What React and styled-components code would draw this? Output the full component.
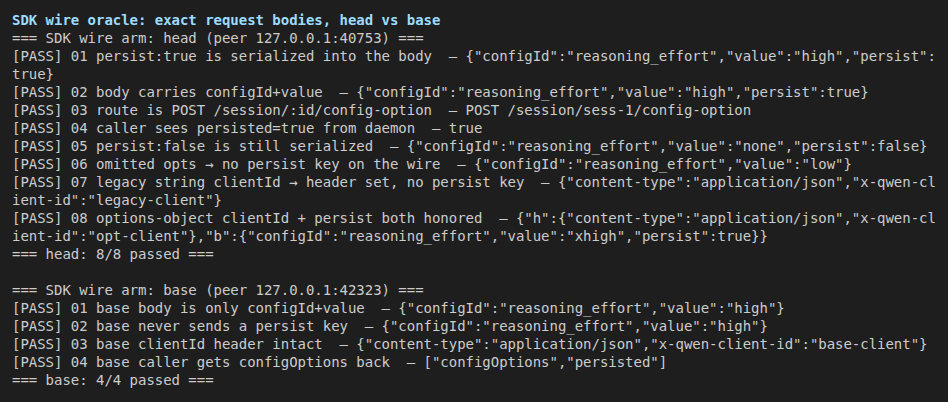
import React from "react";
import styled, { createGlobalStyle } from "styled-components";

const Global = createGlobalStyle`
  html, body { margin: 0; padding: 0; background: #1e1e1e; }
  #root { min-height: 402px; background: #1e1e1e; }
`;

const Terminal = styled.div`
  box-sizing: border-box;
  width: 948px;
  min-height: 402px;
  padding: 11px 12px;
  background: #1e1e1e;
  color: #cccccc;
  font-family: "DejaVu Sans Mono", "Liberation Mono", monospace;
  font-size: 14px;
  line-height: 18px;
  letter-spacing: -0.03px;
`;

const Title = styled.div`
  color: #9cdcfe;
  font-weight: bold;
  white-space: pre;
`;

const Line = styled.div`
  white-space: pre;
  min-height: 18px;
`;

const lines = [
  "=== SDK wire arm: head (peer 127.0.0.1:40753) ===",
  '[PASS] 01 persist:true is serialized into the body  — {"configId":"reasoning_effort","value":"high","persist":',
  "true}",
  '[PASS] 02 body carries configId+value  — {"configId":"reasoning_effort","value":"high","persist":true}',
  "[PASS] 03 route is POST /session/:id/config-option  — POST /session/sess-1/config-option",
  "[PASS] 04 caller sees persisted=true from daemon  — true",
  '[PASS] 05 persist:false is still serialized  — {"configId":"reasoning_effort","value":"none","persist":false}',
  '[PASS] 06 omitted opts → no persist key on the wire  — {"configId":"reasoning_effort","value":"low"}',
  '[PASS] 07 legacy string clientId → header set, no persist key  — {"content-type":"application/json","x-qwen-cl',
  'ient-id":"legacy-client"}',
  '[PASS] 08 options-object clientId + persist both honored  — {"h":{"content-type":"application/json","x-qwen-cl',
  'ient-id":"opt-client"},"b":{"configId":"reasoning_effort","value":"xhigh","persist":true}}',
  "=== head: 8/8 passed ===",
  "",
  "=== SDK wire arm: base (peer 127.0.0.1:42323) ===",
  '[PASS] 01 base body is only configId+value  — {"configId":"reasoning_effort","value":"high"}',
  '[PASS] 02 base never sends a persist key  — {"configId":"reasoning_effort","value":"high"}',
  '[PASS] 03 base clientId header intact  — {"content-type":"application/json","x-qwen-client-id":"base-client"}',
  '[PASS] 04 base caller gets configOptions back  — ["configOptions","persisted"]',
  "=== base: 4/4 passed ===",
];

export default function App() {
  return (
    <>
      <Global />
      <Terminal>
        <Title>SDK wire oracle: exact request bodies, head vs base</Title>
        {lines.map((l, i) => (
          <Line key={i}>{l}</Line>
        ))}
      </Terminal>
    </>
  );
}
